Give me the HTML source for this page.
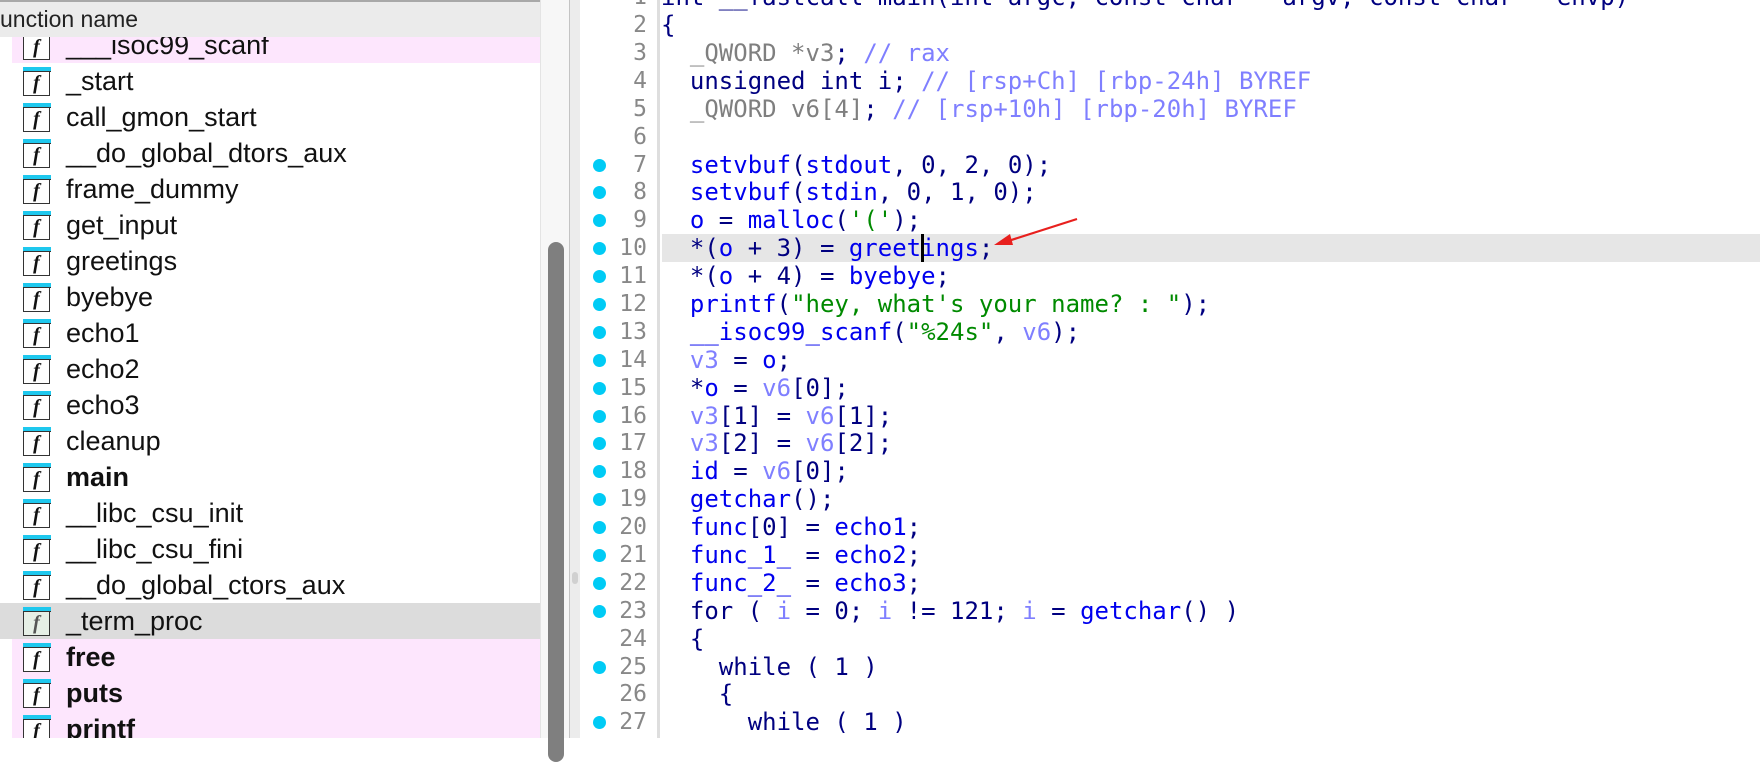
<!DOCTYPE html>
<html><head><meta charset="utf-8"><style>
*{margin:0;padding:0;box-sizing:border-box}
body{width:1760px;height:738px;overflow:hidden;background:#fff;position:relative;font-family:"Liberation Sans",Arial,sans-serif}
.abs{position:absolute}
#list{left:0;top:0;width:540px;height:738px;overflow:hidden}
.row{position:absolute;left:0;width:540px;height:36px}
.row .t{position:absolute;left:66px;top:3px;font-size:27px;color:#111;line-height:30px}
.row.b .t{font-weight:bold}
.pink{background:#fde6fd;left:12px!important;width:528px!important}
.pink .t{left:54px}
.pink .ic{left:11px}
.sel{background:#dcdcdc}
.ic{position:absolute;left:23px;top:4px;width:27px;height:29px;border:1.5px solid #333;border-top:none;background:#fff}
.ic:before{content:"";position:absolute;left:-1.5px;right:-1.5px;top:0;height:4px;background:#1ec8ee;border-bottom:1px solid #333}
.ic i{position:absolute;left:0;right:0;top:5px;text-align:center;font:italic bold 20px "Liberation Serif",serif;color:#111}
.sel .ic{background:#e6efe6}
.sel .ic i{color:#555}
#hdr{left:0;top:0;width:542px;height:37px;background:#ebebeb;border-top:2px solid #a8a8a8;font-size:23px;color:#222;line-height:34px;white-space:nowrap}
#code{left:0;top:-15.8px;width:1760px}
.ln{position:relative;height:27.9px;line-height:27.9px;white-space:pre;font-family:"DejaVu Sans Mono","Liberation Mono",monospace;font-size:24px;color:#000080}
.ln .n{position:absolute;right:1113px;font-size:23px;color:#888}
.ln .c{position:absolute;left:661px}
.ln .d{position:absolute;left:593px;top:7px;width:13px;height:13px;border-radius:50%;background:#00cbf5}
.f{color:#0000ee}.v{color:#7f7fff}.g{color:#7f7f7f}.s{color:#008a00}.m{color:#7f7fff}
</style></head><body>
<div id="list" class="abs">
<div class="row pink" style="top:27px"><div class="ic"><i>f</i></div><div class="t">___isoc99_scanf</div></div>
<div class="row" style="top:63px"><div class="ic"><i>f</i></div><div class="t">_start</div></div>
<div class="row" style="top:99px"><div class="ic"><i>f</i></div><div class="t">call_gmon_start</div></div>
<div class="row" style="top:135px"><div class="ic"><i>f</i></div><div class="t">__do_global_dtors_aux</div></div>
<div class="row" style="top:171px"><div class="ic"><i>f</i></div><div class="t">frame_dummy</div></div>
<div class="row" style="top:207px"><div class="ic"><i>f</i></div><div class="t">get_input</div></div>
<div class="row" style="top:243px"><div class="ic"><i>f</i></div><div class="t">greetings</div></div>
<div class="row" style="top:279px"><div class="ic"><i>f</i></div><div class="t">byebye</div></div>
<div class="row" style="top:315px"><div class="ic"><i>f</i></div><div class="t">echo1</div></div>
<div class="row" style="top:351px"><div class="ic"><i>f</i></div><div class="t">echo2</div></div>
<div class="row" style="top:387px"><div class="ic"><i>f</i></div><div class="t">echo3</div></div>
<div class="row" style="top:423px"><div class="ic"><i>f</i></div><div class="t">cleanup</div></div>
<div class="row b" style="top:459px"><div class="ic"><i>f</i></div><div class="t">main</div></div>
<div class="row" style="top:495px"><div class="ic"><i>f</i></div><div class="t">__libc_csu_init</div></div>
<div class="row" style="top:531px"><div class="ic"><i>f</i></div><div class="t">__libc_csu_fini</div></div>
<div class="row" style="top:567px"><div class="ic"><i>f</i></div><div class="t">__do_global_ctors_aux</div></div>
<div class="row sel" style="top:603px"><div class="ic"><i>f</i></div><div class="t">_term_proc</div></div>
<div class="row pink b" style="top:639px"><div class="ic"><i>f</i></div><div class="t">free</div></div>
<div class="row pink b" style="top:675px"><div class="ic"><i>f</i></div><div class="t">puts</div></div>
<div class="row pink b" style="top:711px"><div class="ic"><i>f</i></div><div class="t">printf</div></div>
</div>
<div id="hdr" class="abs">unction name</div>
<div class="abs" style="left:540px;top:0;width:30px;height:738px;background:#f7f7f7;border-left:1px solid #e4e4e4;border-right:1px solid #c4c4c4"></div>
<div class="abs" style="left:548px;top:242px;width:16px;height:520px;background:#7f7f7f;border-radius:8px"></div>
<div class="abs" style="left:570px;top:0;width:10px;height:738px;background:#ececec"></div>
<div class="abs" style="left:572px;top:572px;width:6px;height:12px;background:#d0d0d0;border-radius:3px"></div>
<div class="abs" style="left:657px;top:0;width:3px;height:738px;background:#dedede"></div>
<div class="abs" style="left:662px;top:234px;width:1098px;height:28px;background:#e6e6e6"></div>
<div id="code" class="abs">
<div class="ln"><span class="n">1</span><span class="c">int __fastcall main(int argc, const char **argv, const char **envp)</span></div>
<div class="ln"><span class="n">2</span><span class="c">{</span></div>
<div class="ln"><span class="n">3</span><span class="c">  <span class="g">_QWORD *v3</span>; <span class="m">// rax</span></span></div>
<div class="ln"><span class="n">4</span><span class="c">  unsigned int i; <span class="m">// [rsp+Ch] [rbp-24h] BYREF</span></span></div>
<div class="ln"><span class="n">5</span><span class="c">  <span class="g">_QWORD v6[4]</span>; <span class="m">// [rsp+10h] [rbp-20h] BYREF</span></span></div>
<div class="ln"><span class="n">6</span></div>
<div class="ln"><span class="d"></span><span class="n">7</span><span class="c">  <span class="f">setvbuf</span>(<span class="f">stdout</span>, 0, 2, 0);</span></div>
<div class="ln"><span class="d"></span><span class="n">8</span><span class="c">  <span class="f">setvbuf</span>(<span class="f">stdin</span>, 0, 1, 0);</span></div>
<div class="ln"><span class="d"></span><span class="n">9</span><span class="c">  <span class="f">o</span> = <span class="f">malloc</span>(<span class="s">'('</span>);</span></div>
<div class="ln"><span class="d"></span><span class="n">10</span><span class="c">  *(<span class="f">o</span> + 3) = <span class="f">greetings</span>;</span></div>
<div class="ln"><span class="d"></span><span class="n">11</span><span class="c">  *(<span class="f">o</span> + 4) = <span class="f">byebye</span>;</span></div>
<div class="ln"><span class="d"></span><span class="n">12</span><span class="c">  <span class="f">printf</span>(<span class="s">"hey, what's your name? : "</span>);</span></div>
<div class="ln"><span class="d"></span><span class="n">13</span><span class="c">  <span class="f">__isoc99_scanf</span>(<span class="s">"%24s"</span>, <span class="v">v6</span>);</span></div>
<div class="ln"><span class="d"></span><span class="n">14</span><span class="c">  <span class="v">v3</span> = <span class="f">o</span>;</span></div>
<div class="ln"><span class="d"></span><span class="n">15</span><span class="c">  *<span class="f">o</span> = <span class="v">v6</span>[0];</span></div>
<div class="ln"><span class="d"></span><span class="n">16</span><span class="c">  <span class="v">v3</span>[1] = <span class="v">v6</span>[1];</span></div>
<div class="ln"><span class="d"></span><span class="n">17</span><span class="c">  <span class="v">v3</span>[2] = <span class="v">v6</span>[2];</span></div>
<div class="ln"><span class="d"></span><span class="n">18</span><span class="c">  <span class="f">id</span> = <span class="v">v6</span>[0];</span></div>
<div class="ln"><span class="d"></span><span class="n">19</span><span class="c">  <span class="f">getchar</span>();</span></div>
<div class="ln"><span class="d"></span><span class="n">20</span><span class="c">  <span class="f">func</span>[0] = <span class="f">echo1</span>;</span></div>
<div class="ln"><span class="d"></span><span class="n">21</span><span class="c">  <span class="f">func_1_</span> = <span class="f">echo2</span>;</span></div>
<div class="ln"><span class="d"></span><span class="n">22</span><span class="c">  <span class="f">func_2_</span> = <span class="f">echo3</span>;</span></div>
<div class="ln"><span class="d"></span><span class="n">23</span><span class="c">  for ( <span class="v">i</span> = 0; <span class="v">i</span> != 121; <span class="v">i</span> = <span class="f">getchar</span>() )</span></div>
<div class="ln"><span class="n">24</span><span class="c">  {</span></div>
<div class="ln"><span class="d"></span><span class="n">25</span><span class="c">    while ( 1 )</span></div>
<div class="ln"><span class="n">26</span><span class="c">    {</span></div>
<div class="ln"><span class="d"></span><span class="n">27</span><span class="c">      while ( 1 )</span></div>
</div>
<div class="abs" style="left:921px;top:234px;width:3px;height:28px;background:#000"></div>
<svg class="abs" style="left:980px;top:205px" width="110" height="50" viewBox="0 0 110 50">
<line x1="97" y1="14" x2="25" y2="37" stroke="#e8201e" stroke-width="2.2"/>
<polygon points="14,40 30,29 33,40" fill="#e8201e"/>
</svg>
</body></html>
